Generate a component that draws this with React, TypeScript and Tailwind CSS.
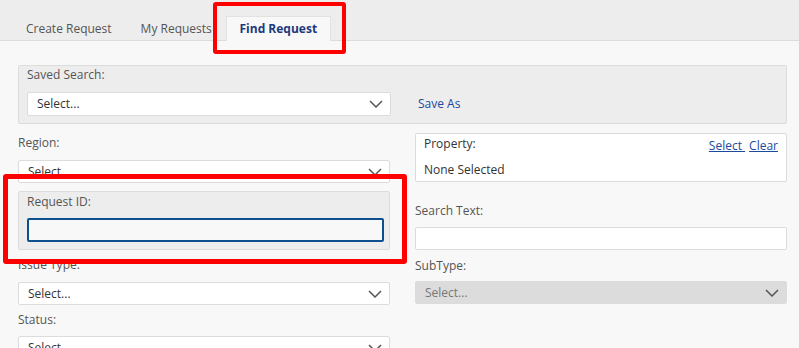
const font = { fontFamily: '"Open Sans", "Liberation Sans", sans-serif' };

const Chevron = () => (
  <svg width="14" height="8" viewBox="0 0 14 8" fill="none" className="shrink-0">
    <path d="M1 1 L7 7 L13 1" stroke="#555" strokeWidth="1.5" />
  </svg>
);

const Select = ({ disabled = false, tall = false }: { disabled?: boolean; tall?: boolean }) => (
  <div
    className={`flex ${tall ? 'h-[24px]' : 'h-[23px]'} items-center justify-between rounded-[2px] border pl-[9px] pr-[7px] text-[12px] ${
      disabled ? 'border-[#dcdcdc] bg-[#dcdcdc] text-[#777]' : 'border-[#dcdcdc] bg-white text-[#333]'
    }`}
  >
    <span>Select...</span>
    <Chevron />
  </div>
);

const Label = ({ children, className = '' }: { children: React.ReactNode; className?: string }) => (
  <div className={`h-[18px] text-[12px] leading-[18px] text-[#555] ${className}`}>{children}</div>
);

export default function App() {
  return (
    <div className="relative h-[348px] w-[799px] overflow-hidden bg-[#f8f8f8]" style={font}>
      {/* tabs */}
      <div className="flex h-[41px] items-end border-b border-[#dcdcdc] bg-[#ededed] pl-[26px] text-[12px] leading-[18px]">
        <div className="pb-[2px] text-[#555]">Create Request</div>
        <div className="ml-[29px] pb-[2px] text-[#555]">My Requests</div>
        <div className="-mb-px ml-[14px] flex h-[25px] w-[105px] items-center justify-center border border-b-0 border-[#e2e2e2] bg-[#f8f8f8] font-bold text-[#1d3a7c]">
          Find Request
        </div>
      </div>

      <div className="pl-[18px] pr-[12px] pt-[24px]">
        {/* saved search */}
        <div className="h-[59px] rounded-[2px] border border-[#dcdcdc] bg-[#ededed] px-[8px]">
          <Label className="text-[#333]">Saved Search:</Label>
          <div className="mt-[8px] flex items-center">
            <div className="w-[364px]">
              <Select tall />
            </div>
            <a className="ml-[27px] text-[12px] text-[#1a4a9e]">Save As</a>
          </div>
        </div>

        <div className="mt-[9px] flex gap-[25px]">
          {/* left column */}
          <div className="w-[372px]">
            <Label className="mt-[1px]">Region:</Label>
            <div className="mt-[8px]">
              <Select />
            </div>
            <div className="mt-[8px] h-[59px] rounded-[2px] border border-[#dcdcdc] bg-[#ededed] px-[8px] pt-[1px]">
              <Label className="text-[#333]">Request ID:</Label>
              <div className="mt-[7px] h-[24px] w-[357px] rounded-[2px] border-2 border-[#0e4f8f] bg-[#f8f8f8]" />
            </div>
            <Label className="mt-[6px]">Issue Type:</Label>
            <div className="mt-[8px]">
              <Select />
            </div>
            <Label className="mt-[6px]">Status:</Label>
            <div className="mt-[7px]">
              <Select />
            </div>
          </div>

          {/* right column */}
          <div className="w-[372px]">
            <div className="h-[49px] rounded-[2px] border border-[#dcdcdc] bg-white px-[8px] pt-[1px] text-[12px] leading-[18px] text-[#333]">
              <div className="flex justify-between">
                <span>Property:</span>
                <span className="mt-[2px] text-[#1a4a9e]">
                  <a className="underline">Select&nbsp;</a>
                  <a className="ml-[4px] underline">Clear</a>
                </span>
              </div>
              <div className="mt-[6px]">None Selected</div>
            </div>
            <Label className="mt-[20px]">Search Text:</Label>
            <div className="mt-[7px] h-[23px] rounded-[2px] border border-[#dcdcdc] bg-white" />
            <Label className="mt-[7px]">SubType:</Label>
            <div className="mt-[6px]">
              <Select disabled />
            </div>
          </div>
        </div>
      </div>

      {/* annotation boxes */}
      <div className="pointer-events-none absolute left-[213px] top-[2px] h-[52px] w-[133px] rounded-[3px] border-[4px] border-[#ff0000]" />
      <div className="pointer-events-none absolute left-[3px] top-[174px] h-[90px] w-[404px] rounded-[3px] border-[5px] border-[#ff0000]" />
    </div>
  );
}
